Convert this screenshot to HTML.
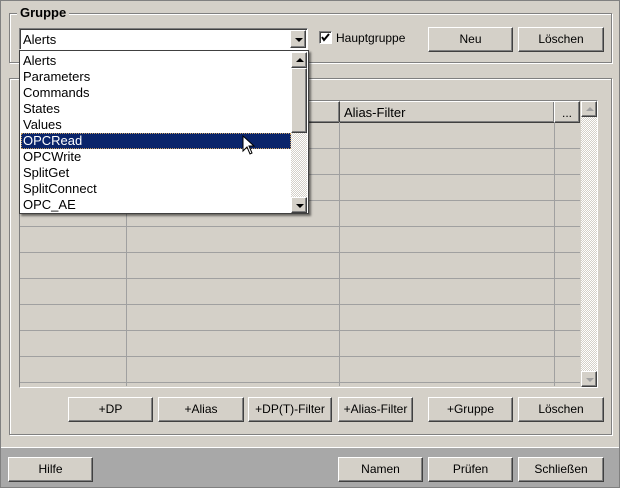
<!DOCTYPE html><html><head><style>
*{margin:0;padding:0;box-sizing:border-box}
body{width:620px;height:488px;background:#d4d0c8;font:12px "Liberation Sans",sans-serif;position:relative;overflow:hidden}
.a{position:absolute}
.btn{position:absolute;background:#d4d0c8;border:1px solid;border-color:#fff #404040 #404040 #fff;box-shadow:inset -1px -1px 0 #808080;text-align:center;font-size:12px;color:#000}
.grp{position:absolute;border:1px solid #808080;box-shadow:1px 1px 0 #fff,inset 1px 1px 0 #fff}
.sb{position:absolute;width:16px;height:16px;background:#d4d0c8;border:1px solid;border-color:#fff #404040 #404040 #fff;box-shadow:inset -1px -1px 0 #808080}
.tri{position:absolute;left:4px;width:0;height:0;border-left:4px solid transparent;border-right:4px solid transparent}
.hl{position:absolute;height:1px;background:#a0a0a0;left:20px;width:560px}
.vl{position:absolute;width:1px;background:#a0a0a0;top:122px;height:264px}
.chk{background-image:repeating-conic-gradient(#d4d0c8 0 25%,#fff 0 50%);background-size:2px 2px}
</style></head><body>
<div class="a" style="left:0;top:0;width:620px;height:488px;border:1px solid #808080"></div>
<div class="grp" style="left:9px;top:13px;width:603px;height:50px"></div>
<div class="a" style="left:17px;top:5px;background:#d4d0c8;padding:0 3px;font-weight:bold;font-size:13px">Gruppe</div>
<div class="grp" style="left:9px;top:78px;width:603px;height:357px"></div>
<div class="a" style="left:19px;top:100px;width:579px;height:288px;border:1px solid;border-color:#808080 #fff #fff #808080"></div>
<div class="btn" style="left:339px;top:101px;width:216px;height:22px;text-align:left;padding:3px 4px 0;font-size:13px">Alias-Filter</div>
<div class="btn" style="left:554px;top:101px;width:26px;height:22px;line-height:22px">...</div>
<div class="btn" style="left:126px;top:101px;width:214px;height:22px"></div>
<div class="btn" style="left:20px;top:101px;width:107px;height:22px"></div>
<div class="hl" style="top:148px"></div><div class="hl" style="top:174px"></div><div class="hl" style="top:200px"></div><div class="hl" style="top:226px"></div><div class="hl" style="top:252px"></div><div class="hl" style="top:278px"></div><div class="hl" style="top:304px"></div><div class="hl" style="top:330px"></div><div class="hl" style="top:356px"></div><div class="hl" style="top:382px"></div>
<div class="vl" style="left:126px"></div><div class="vl" style="left:339px"></div><div class="vl" style="left:554px"></div>
<div class="a chk" style="left:581px;top:101px;width:16px;height:286px"></div>
<div class="sb" style="left:581px;top:101px"><div class="tri" style="top:5px;border-bottom:4px solid #a0a0a0"></div></div>
<div class="sb" style="left:581px;top:371px"><div class="tri" style="top:6px;border-top:4px solid #a0a0a0"></div></div>
<div class="btn" style="left:68px;top:397px;width:85px;height:25px;line-height:23px">+DP</div>
<div class="btn" style="left:158px;top:397px;width:86px;height:25px;line-height:23px">+Alias</div>
<div class="btn" style="left:248px;top:397px;width:84px;height:25px;line-height:23px">+DP(T)-Filter</div>
<div class="btn" style="left:338px;top:397px;width:75px;height:25px;line-height:23px">+Alias-Filter</div>
<div class="btn" style="left:428px;top:397px;width:85px;height:25px;line-height:23px">+Gruppe</div>
<div class="btn" style="left:518px;top:397px;width:86px;height:25px;line-height:23px">Löschen</div>
<div class="a" style="left:1px;top:447px;width:618px;height:40px;background:#a8a8a8;border-top:1px solid #fff"></div>
<div class="btn" style="left:8px;top:457px;width:85px;height:25px;line-height:23px">Hilfe</div>
<div class="btn" style="left:338px;top:457px;width:85px;height:25px;line-height:23px">Namen</div>
<div class="btn" style="left:428px;top:457px;width:85px;height:25px;line-height:23px">Prüfen</div>
<div class="btn" style="left:518px;top:457px;width:86px;height:25px;line-height:23px">Schließen</div>
<div class="a" style="left:319px;top:31px;width:13px;height:13px;background:#fff;border:1px solid;border-color:#808080 #fff #fff #808080;box-shadow:inset 1px 1px 0 #404040"><svg width="11" height="11" style="position:absolute;left:0;top:0"><path d="M2 5 L4 8 L9 2" stroke="#000" stroke-width="2" fill="none"/></svg></div>
<div class="a" style="left:336px;top:31px">Hauptgruppe</div>
<div class="btn" style="left:428px;top:27px;width:85px;height:25px;line-height:23px">Neu</div>
<div class="btn" style="left:518px;top:27px;width:86px;height:25px;line-height:23px">Löschen</div>
<div class="a" style="left:19px;top:28px;width:289px;height:22px;background:#fff;border:1px solid;border-color:#808080 #fff #fff #808080;box-shadow:inset 1px 1px 0 #404040;padding:3px 3px;font-size:13px">Alerts</div>
<div class="sb" style="left:290px;top:30px;height:18px"><div class="tri" style="top:7px;border-top:4px solid #000"></div></div>
<div class="a" style="left:19px;top:50px;width:290px;height:164px;background:#fff;border:1px solid #404040;box-shadow:2px 2px 2px rgba(0,0,0,.5)">
<div style="position:absolute;left:3px;top:2px;font-size:13px;line-height:16px;width:268px">
<div>Alerts</div><div>Parameters</div><div>Commands</div><div>States</div><div>Values</div>
<div style="background:#0a246a;color:#fff;margin-left:-2px;padding-left:2px;outline:1px dotted #c8a060;outline-offset:-1px">OPCRead</div>
<div>OPCWrite</div><div>SplitGet</div><div>SplitConnect</div><div>OPC_AE</div></div>
<div class="a chk" style="left:271px;top:82px;width:16px;height:64px"></div>
<div class="sb" style="left:271px;top:1px"><div class="tri" style="top:5px;border-bottom:4px solid #000"></div></div>
<div class="a" style="left:271px;top:17px;width:16px;height:65px;background:#d4d0c8;border:1px solid;border-color:#fff #404040 #404040 #fff;box-shadow:inset -1px -1px 0 #808080"></div>
<div class="sb" style="left:271px;top:146px"><div class="tri" style="top:6px;border-top:4px solid #000"></div></div>
</div>
<svg class="a" style="left:242px;top:135px" width="14" height="22"><path d="M1 1 L1 16 L5 12 L8 19 L10 18 L7 11 L12 11 Z" fill="#fff" stroke="#000"/></svg>
</body></html>
